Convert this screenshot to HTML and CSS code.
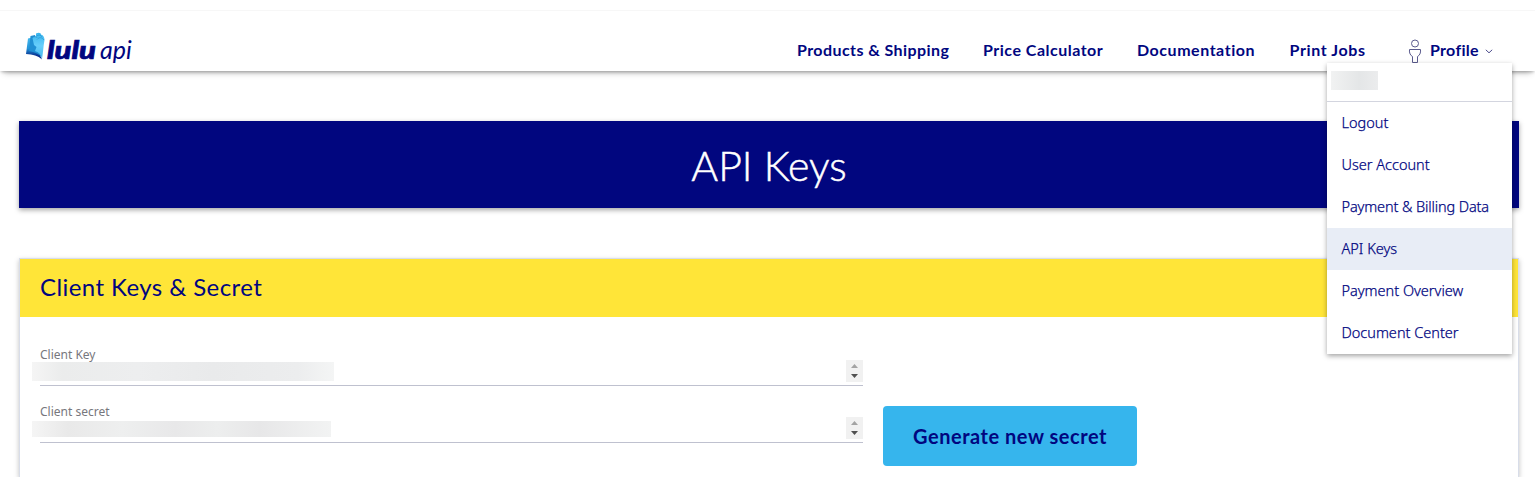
FILE: index.html
```html
<!DOCTYPE html>
<html lang="en">
<head>
<meta charset="utf-8">
<title>API Keys</title>
<link rel="stylesheet" href="styles.css">
</head>
<body>
<header class="header">
  <a class="logo">
    <svg class="logo-book" viewBox="0 0 20 29" width="20" height="29">
      <defs>
        <linearGradient id="cover" x1="0" y1="0" x2="0" y2="1"><stop offset="0" stop-color="#41b9ef"/><stop offset=".5" stop-color="#2594d8"/><stop offset=".85" stop-color="#062b8c"/></linearGradient>
        <linearGradient id="page" x1="0" y1="0" x2="0" y2="1"><stop offset="0" stop-color="#38b5ed"/><stop offset=".5" stop-color="#67cefb"/><stop offset="1" stop-color="#45b6ec"/></linearGradient>
      </defs>
      <path d="M2 6.500 L6 5.500 L16 27.500 C12 23.500 7 22.500 0 22 Z" fill="url(#cover)"/>
      <path d="M4.500 4 L9 3 L16 26.500 C14 22 9 20 3 19 Z" fill="#208fd3"/>
      <path d="M10 1.500 C13 0 14.500 .5 15.500 3 C17 3 18.500 5 18.500 8 C17.500 13 17 21 16 27 C15.500 23 13 20.500 9 19 L10.500 15 L8 13 L6.500 6 C7 5 9 4.500 10 4.500 Z" fill="url(#page)"/>
      <path d="M5 6.500 C7 4.500 10 4 11.500 6 M10.500 4 C13 2.500 15 3 16 5 M11 7.500 C13 5 16 5 18 8" fill="none" stroke="#238fcf" stroke-width=".6"/>
    </svg>
    <span class="logo-lulu">lulu</span><span class="logo-api">api</span>
  </a>
  <nav class="nav">
    <a class="n1">Products &amp; Shipping</a>
    <a class="n2">Price Calculator</a>
    <a class="n3">Documentation</a>
    <a class="n4">Print Jobs</a>
    <a class="profile">
      <svg class="person" viewBox="0 0 14 24" width="14" height="24" fill="none" stroke="#5b5b8e" stroke-width="1"><circle cx="7" cy="4.500" r="3.500"/><path d="M1.500 10.500 H12.500 C13 14 11.500 16.500 9.500 17.500 V23.500 H4.500 V17.500 C2.500 16.500 1 14 1.500 10.500 Z"/></svg>
      <span class="n5">Profile</span>
      <svg class="chevron" viewBox="0 0 8 5" width="8" height="5" fill="none" stroke="#4c4c8c"><path d="M.8 .8 L4 3.800 L7.200 .8"/></svg>
    </a>
  </nav>
  <div class="menu">
    <div class="menu-user"><span class="user-mask"></span></div>
    <a class="m1">Logout</a>
    <a class="m2">User Account</a>
    <a class="m3">Payment &amp; Billing Data</a>
    <a class="m4 active">API Keys</a>
    <a class="m5">Payment Overview</a>
    <a class="m6">Document Center</a>
  </div>
</header>
<main class="main">
  <h1 class="banner"><span>API Keys</span></h1>
  <section class="card">
    <h2 class="card-title">Client Keys &amp; Secret</h2>
    <div class="card-body">
      <div class="fields">
        <div class="field">
          <label class="label-key">Client Key</label>
          <div class="value"><span class="mask mask-key"></span>
            <svg class="spin" viewBox="0 0 17 22" width="17" height="22"><path fill="#f1f1f1" d="M0 0h17v22H0z"/><path fill="#a3a3a3" d="M5 8h7L8.500 4z"/><path fill="#505050" d="M5 14h7l-3.500 4z"/></svg></div>
        </div>
        <div class="field">
          <label class="label-secret">Client secret</label>
          <div class="value"><span class="mask mask-secret"></span>
            <svg class="spin" viewBox="0 0 17 22" width="17" height="22"><path fill="#f1f1f1" d="M0 0h17v22H0z"/><path fill="#a3a3a3" d="M5 8h7L8.500 4z"/><path fill="#505050" d="M5 14h7l-3.500 4z"/></svg></div>
        </div>
      </div>
      <button class="generate"><span>Generate new secret</span></button>
    </div>
  </section>
</main>
</body>
</html>
```
FILE: styles.css
```css
* { box-sizing: border-box; }
body { margin: 0; padding-top: 10px; height: 477px; overflow: hidden; background: #fff; color: #01067f; font-family: Lato, sans-serif; }
a, span, label, h2 { white-space: nowrap; }
.header { position: relative; z-index: 2; height: 61px; border-top: 1px solid #f7f7f7; background: #fff; display: flex; justify-content: space-between; box-shadow: 0 6px 6px -4px rgba(0,0,0,.25), 0 2px 3px -1px rgba(0,0,0,.25); }
.logo { display: flex; margin-left: 26px; height: 60px; padding-top: 20px; }
.logo-book { margin-top: 1px; }
.logo-lulu { width: 53px; margin-left: 1px; font: italic 900 25px/36px Lato, sans-serif; -webkit-text-stroke: .7px #01067f; transform: scaleX(1.24); transform-origin: 0 0; }
.logo-api { font: italic 400 25px/36px Lato, sans-serif; }
.nav { display: flex; padding: 27px 42px 0 0; font-size: 16px; line-height: 24px; font-weight: 700; }
.n1 { width: 186px; letter-spacing: .42px; }
.n2 { width: 154px; letter-spacing: .5px; }
.n3 { width: 152.500px; letter-spacing: .54px; }
.n4 { width: 118.500px; letter-spacing: .62px; }
.profile { display: flex; width: 85px; }
.person { flex: none; margin-top: 1px; }
.n5 { width: 56px; margin-left: 8px; letter-spacing: .3px; }
.chevron { flex: none; margin-top: 11px; }
.menu { position: absolute; top: 52px; right: 23px; width: 185px; height: 291px; background: #fff; box-shadow: 0 2px 5px rgba(0,0,0,.36); font-family: "Noto Sans", sans-serif; font-size: 14.500px; font-weight: 300; -webkit-text-stroke: .25px #01067f; }
.menu-user { height: 39px; padding: 8px 4px; border-bottom: 1px solid #d3d5df; }
.user-mask { display: block; width: 47px; height: 19px; background: linear-gradient(90deg, #f1f2f2, #e4e6e7 60%, #ebeced); }
.menu a { display: block; height: 42px; padding-left: 14.500px; line-height: 40px; }
.menu .active { background: #e8edf6; }
.menu .m3 { letter-spacing: -.12px; }
.main { padding: 50px 16px 0 19px; }
.banner { height: 87px; margin: 0 0 50px; background: #01067f; color: #fff; font-size: 41px; font-weight: 300; line-height: 89px; text-align: center; -webkit-text-stroke: .5px #fff; box-shadow: 0 2px 5px rgba(0,0,0,.36); }
.card { height: 219px; border: 1px solid #d8dde9; border-bottom: 0; box-shadow: 0 2px 5px rgba(0,0,0,.25); }
.card-title { height: 58px; margin: 0; padding-left: 20px; background: #ffe538; font-size: 24px; line-height: 56px; font-weight: 400; letter-spacing: .42px; }
.card-body { display: flex; padding: 29px 20px 0; gap: 20px; }
.fields { width: 823px; }
.field { height: 57px; color: #77777d; font-family: "Noto Sans", sans-serif; font-size: 12px; }
.field label { display: block; height: 14px; line-height: 18px; }
.value { display: flex; justify-content: space-between; height: 26px; border-bottom: 1px solid #bfc1cf; }
.mask { height: 19px; margin: 2px 0 0 -8px; }
.mask-key { width: 302px; background: linear-gradient(90deg, #f5f5f5, #ebecec 10%, #edeeef 35%, #e9eaeb 60%, #ecedee 88%, #f4f5f5); }
.mask-secret { width: 299px; height: 16px; margin-top: 4px; background: linear-gradient(90deg, #f5f5f5, #e9e9e9 12%, #eeefef 30%, #e8e8e9 48%, #edeeee 62%, #e7e7e8 76%, #f2f3f3); }
.spin { flex: none; }
.generate { width: 254px; height: 60px; margin-top: 60px; border: 0; border-radius: 4px; background: #36b5ed; color: #01067f; font: 700 20px/60px Lato, sans-serif; letter-spacing: .53px; padding: 0; }
```
